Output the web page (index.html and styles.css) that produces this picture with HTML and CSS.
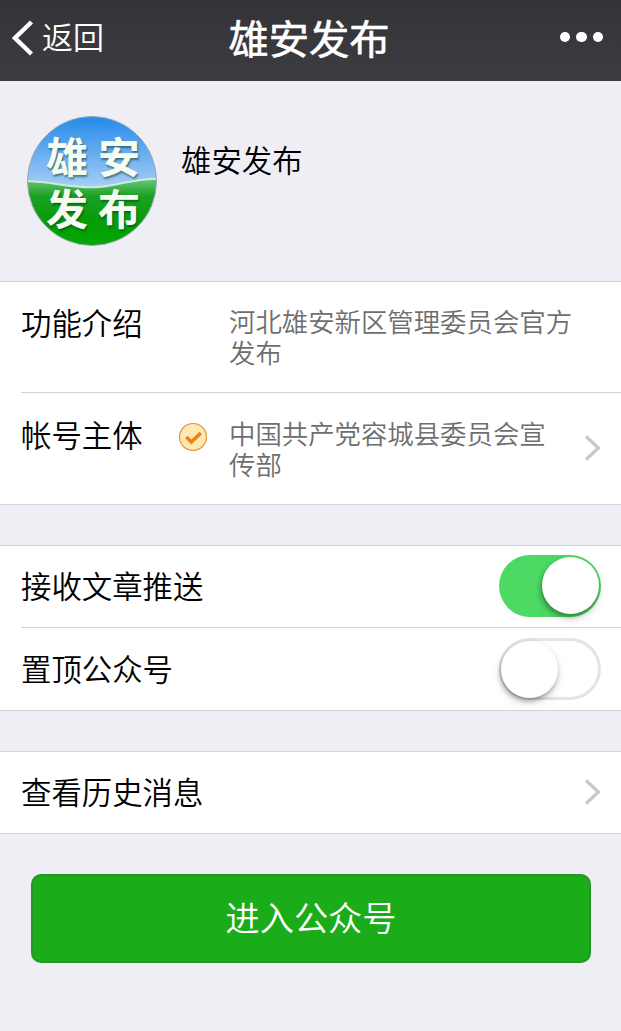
FILE: index.html
```html
<!DOCTYPE html>
<html lang="zh-CN">
<head>
    <meta charset="UTF-8">
    <meta name="viewport" content="width=device-width, initial-scale=1.0">
    <title>雄安发布</title>
    <link rel="stylesheet" href="styles.css">
</head>
<body>
    <header class="navbar">
        <a class="back">
            <svg class="back-icon" width="22" height="36" viewBox="0 0 22 36">
                <path d="M19.5 2 L3 18 L19.5 34" fill="none" stroke="#fff" stroke-width="4.4"/>
            </svg>
            <span>返回</span>
        </a>
        <h1>雄安发布</h1>
        <div class="more"><i></i><i></i><i></i></div>
    </header>

    <section class="profile">
        <div class="avatar">
            <svg class="avatar-bg" width="130" height="130" viewBox="0 0 130 130">
                <defs>
                    <linearGradient id="sky" x1="0" y1="0" x2="0" y2="1">
                        <stop offset="0" stop-color="#2389ea"/>
                        <stop offset="1" stop-color="#a9cff6"/>
                    </linearGradient>
                    <linearGradient id="grass" x1="0" y1="0" x2="0" y2="1">
                        <stop offset="0" stop-color="#6cc779"/>
                        <stop offset="0.25" stop-color="#1ba224"/>
                        <stop offset="0.6" stop-color="#069c08"/>
                        <stop offset="1" stop-color="#02a802"/>
                    </linearGradient>
                    <clipPath id="round"><circle cx="65" cy="65" r="64.5"/></clipPath>
                </defs>
                <g clip-path="url(#round)">
                    <rect width="130" height="72" fill="url(#sky)"/>
                    <path d="M0 65 C30 66 45 73 72 71 C95 69 108 62 130 63 V130 H0 Z" fill="url(#grass)"/>
                    <path d="M0 65 C30 66 45 73 72 71 C95 69 108 62 130 63" fill="none" stroke="#c5efdc" stroke-width="2"/>
                </g>
                <circle cx="65" cy="65" r="64.5" fill="none" stroke="#9aa8b0"/>
            </svg>
            <div class="avatar-text">
                <span>雄</span><span>安</span>
                <span>发</span><span>布</span>
            </div>
        </div>
        <h2>雄安发布</h2>
    </section>

    <section class="group">
        <div class="row info">
            <span class="label">功能介绍</span>
            <p class="value">河北雄安新区管理委员会官方发布</p>
        </div>
        <div class="row info owner">
            <span class="label">帐号主体</span>
            <svg class="verified" width="30" height="30" viewBox="0 0 30 30">
                <circle cx="15" cy="15" r="13.5" fill="#ffe9b3" stroke="#e0943c" stroke-width="1.2"/>
                <path d="M8.3 15 L13.3 20 L22.8 11" fill="none" stroke="#ee8210" stroke-width="3.6"/>
            </svg>
            <p class="value">中国共产党容城县委员会宣传部</p>
            <svg class="arrow" width="18" height="28" viewBox="0 0 18 28">
                <path d="M2 2.5 L14.5 14 L2 25.5" fill="none" stroke="#c7c7cc" stroke-width="3.2"/>
            </svg>
        </div>
    </section>

    <section class="group">
        <div class="row">
            <span class="label">接收文章推送</span>
            <div class="switch on"><span class="knob"></span></div>
        </div>
        <div class="row">
            <span class="label">置顶公众号</span>
            <div class="switch"><span class="knob"></span></div>
        </div>
    </section>

    <section class="group">
        <div class="row">
            <span class="label">查看历史消息</span>
            <svg class="arrow" width="18" height="28" viewBox="0 0 18 28">
                <path d="M2 2.5 L14.5 14 L2 25.5" fill="none" stroke="#c7c7cc" stroke-width="3.2"/>
            </svg>
        </div>
    </section>

    <button class="enter" type="button">进入公众号</button>
</body>
</html>
```
FILE: styles.css
```css
* {
    box-sizing: border-box;
}
body {
    font-family: "Noto Sans CJK SC", sans-serif;
    font-weight: 350;
    background-color: #efeef4;
    color: #000;
    margin: 0;
    min-height: 1031px;
}
h1, h2, p {
    margin: 0;
    font-weight: inherit;
}
.navbar {
    display: grid;
    grid-template-columns: 1fr auto 1fr;
    align-items: center;
    height: 81px;
    padding: 0 18px 5px 12px;
    background: linear-gradient(#343338, #3d3c41);
    color: #fff;
}
.back {
    display: flex;
    align-items: center;
    gap: 8px;
    font-size: 31px;
    line-height: 40px;
}
.back span {
    margin-top: -4px;
}
.navbar h1 {
    margin: -3px 0 0 3px;
    font-size: 40.3px;
    font-weight: 400;
    line-height: 50px;
    -webkit-text-stroke: 0.6px #fff;
}
.more {
    display: flex;
    justify-content: flex-end;
    margin-top: -2px;
    gap: 6px;
}
.more i {
    width: 10.5px;
    height: 10.5px;
    border-radius: 50%;
    background-color: #fff;
}
.profile {
    display: flex;
    height: 200px;
    padding: 35px 27px;
}
.profile h2 {
    margin: 23px 0 0 24px;
    font-size: 30.4px;
    line-height: 40px;
}
.avatar {
    position: relative;
    width: 130px;
    height: 130px;
}
.avatar-bg {
    display: block;
}
.avatar-text {
    position: absolute;
    top: 13px;
    left: 14px;
    display: grid;
    grid-template-columns: 52px 52px;
    grid-auto-rows: 52px;
    color: #f6fdf0;
    font-size: 42px;
    font-weight: 700;
    line-height: 52px;
    text-align: center;
    text-shadow: 1px 2px 2px rgba(0, 50, 30, 0.5);
}
.group {
    margin-bottom: 40px;
    border-top: 1px solid #d3d2d6;
    border-bottom: 1px solid #d3d2d6;
    background-color: #fff;
}
.row {
    display: flex;
    align-items: center;
    height: 81px;
    margin-left: 21px;
    padding-right: 20px;
}
.row + .row {
    height: 83px;
    border-top: 1px solid #d3d2d6;
}
.label {
    flex: 1;
    margin-top: -3px;
    font-size: 30.4px;
    line-height: 40px;
}
.row.info {
    align-items: flex-start;
    height: 110px;
    padding-top: 22px;
}
.row.owner {
    height: 112px;
    padding-top: 23px;
}
.info .label {
    flex: 0 0 208px;
    margin-top: -2px;
}
.owner .label {
    flex-basis: 157px;
}
.value {
    width: 345px;
    color: #6e6e6e;
    font-size: 26.4px;
    line-height: 31px;
    padding-top: 1px;
}
.verified {
    margin: 6px 21px 0 0;
}
.arrow {
    margin: -2px -1px 0 auto;
}
.owner .arrow {
    margin-top: 18px;
}
.owner .value {
    width: 330px;
}
.switch {
    display: flex;
    align-items: center;
    width: 102px;
    height: 62px;
    padding: 0 2px;
    border-radius: 31px;
    background-color: #fff;
    box-shadow: inset 0 0 0 3px #e4e4e6;
}
.switch.on {
    justify-content: flex-end;
    margin-top: -2px;
    background-color: #4cd964;
    box-shadow: none;
}
.knob {
    width: 57px;
    height: 57px;
    border-radius: 50%;
    background-color: #fff;
    box-shadow: -1px 3px 5px rgba(0, 0, 0, 0.35), 0 6px 12px rgba(0, 0, 0, 0.08);
}
.enter {
    display: block;
    width: 560px;
    height: 89px;
    margin: 0 0 0 31px;
    padding: 0 0 5px;
    border: 2px solid #26962a;
    border-radius: 10px;
    background-color: #1bac1a;
    color: #fff;
    font-family: inherit;
    font-size: 34.2px;
    font-weight: inherit;
}
```
